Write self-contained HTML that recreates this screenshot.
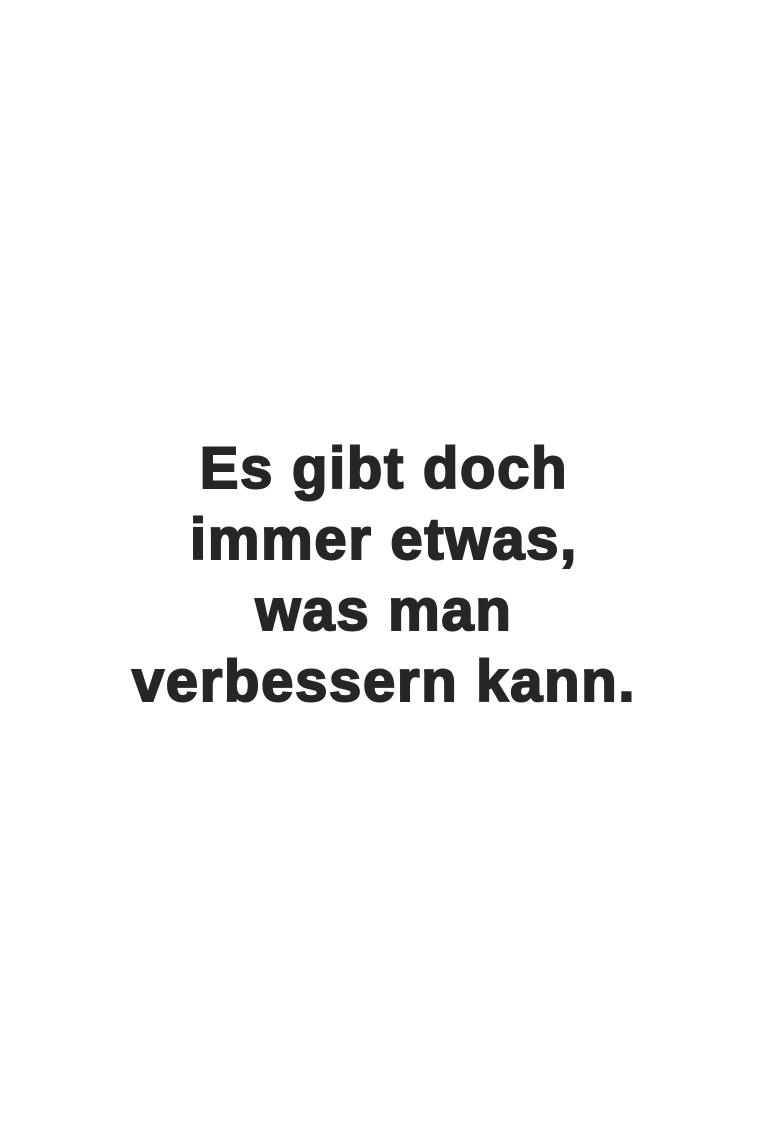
<!DOCTYPE html>
<html><head><style>
html,body{margin:0;padding:0;background:#fff;width:768px;height:1146px;overflow:hidden}
.t{position:absolute;left:0;top:433px;width:768px;text-align:center;font-family:"Liberation Sans",sans-serif;font-weight:bold;font-size:58px;line-height:71px;color:#262626;letter-spacing:1.7px;-webkit-text-stroke:2px #262626}
</style></head><body>
<div class="t">Es gibt doch<br>immer etwas,<br>was man<br>verbessern kann.</div>
</body></html>
